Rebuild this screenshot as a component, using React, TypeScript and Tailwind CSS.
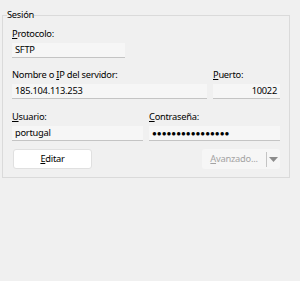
function Field({ value, className, right }: { value: string; className: string; right?: boolean }) {
  return (
    <div
      className={`h-[15px] bg-[#f6f6f6] border-b border-[#c4c4c4] px-[3px] leading-[14px] ${
        right ? "text-right" : ""
      } ${className}`}
    >
      {value}
    </div>
  );
}

function Label({ children }: { children: React.ReactNode }) {
  return <div className="h-[14px] leading-[10px]">{children}</div>;
}

export default function App() {
  return (
    <div
      className="w-[300px] h-[281px] bg-[#f0f0f0] text-[9.3px] tracking-[-0.25px] text-black pt-[8px] pl-[2px]"
      style={{ fontFamily: '"Noto Sans", "Liberation Sans", sans-serif' }}
    >
      <fieldset className="w-[288px] h-[170px] border border-[#dadada] pl-[9px] pr-[8px] pt-[7px] pb-[8px]">
        <legend className="-ml-[5px] px-[0px] leading-[14px]">Sesión</legend>

        <Label>
          <span className="underline">P</span>rotocolo:
        </Label>
        <Field value="SFTP" className="w-[113px]" />

        <div className="flex gap-[6px] mt-[12px]">
          <div>
            <Label>
              Nombre o <span className="underline">I</span>P del servidor:
            </Label>
            <Field value="185.104.113.253" className="w-[195px]" />
          </div>
          <div>
            <Label>
              <span className="underline">P</span>uerto:
            </Label>
            <Field value="10022" right className="w-[67px]" />
          </div>
        </div>

        <div className="flex gap-[6px] mt-[13px]">
          <div>
            <Label>
              <span className="underline">U</span>suario:
            </Label>
            <Field value="portugal" className="w-[131px]" />
          </div>
          <div>
            <Label>
              <span className="underline">C</span>ontraseña:
            </Label>
            <Field value="●●●●●●●●●●●●●●●●" className="w-[131px] text-[8px] tracking-[0px]" />
          </div>
        </div>

        <div className="flex justify-between mt-[8px]">
          <button className="ml-[1px] w-[79px] h-[20px] bg-white border border-[#e0e0e0] rounded-[3px] leading-[18px]">
            <span className="underline">E</span>ditar
          </button>
          <div className="flex items-center w-[78px] h-[20px] bg-[#f6f6f6] rounded-[3px] mr-[1px]">
            <span className="flex-1 text-center text-[#a3a3a3] leading-[18px]">
              <span className="underline">A</span>vanzado...
            </span>
            <span className="w-px h-[15px] bg-[#c4c4c4]" />
            <span className="w-[13px] flex justify-center">
              <svg width="9" height="5" viewBox="0 0 9 5">
                <path d="M0 0h9L4.5 5z" fill="#8c8c8c" />
              </svg>
            </span>
          </div>
        </div>
      </fieldset>
    </div>
  );
}
